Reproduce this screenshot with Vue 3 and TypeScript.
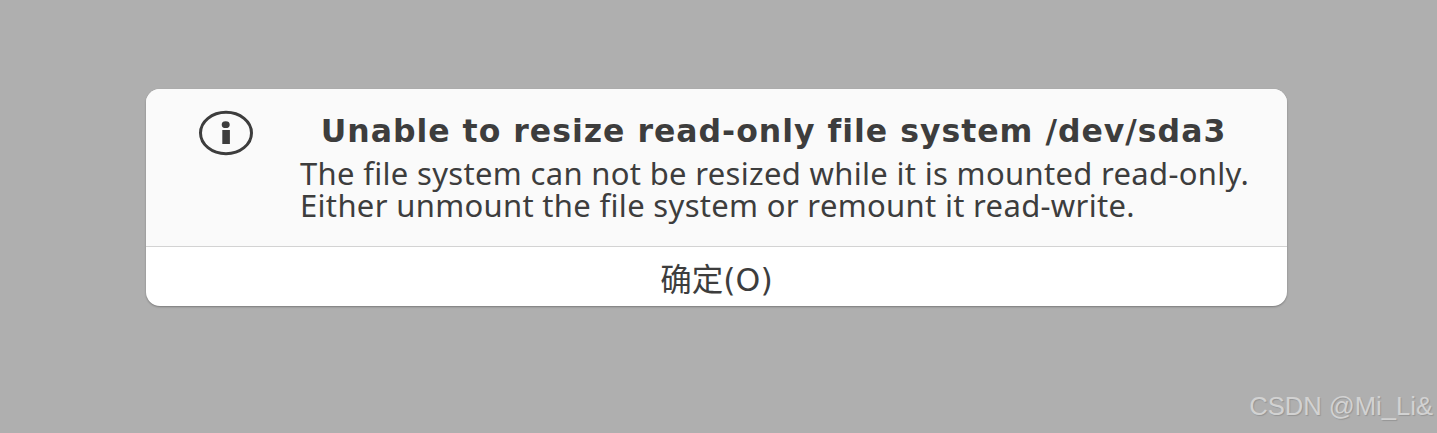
<script setup lang="ts">
const title = 'Unable to resize read-only file system /dev/sda3'
const lines = [
  'The file system can not be resized while it is mounted read-only.',
  'Either unmount the file system or remount it read-write.',
]
</script>

<template>
  <div class="screen">
    <div class="dialog">
      <div class="body">
        <svg class="icon" width="56" height="46" viewBox="0 0 56 46">
          <ellipse cx="28" cy="23" rx="25.5" ry="20.7" fill="none" stroke="#3d3d3d" stroke-width="3" />
          <ellipse cx="27.7" cy="14.7" rx="4" ry="3.4" fill="#3d3d3d" />
          <rect x="24.3" y="20" width="7.6" height="14" fill="#3d3d3d" />
        </svg>
        <div class="texts">
          <h1 class="title">{{ title }}</h1>
          <p v-for="line in lines" :key="line" class="line">{{ line }}</p>
        </div>
      </div>
      <div class="action">确定(O)</div>
    </div>
    <div class="mark">CSDN @Mi_Li&amp;</div>
  </div>
</template>

<style>
html, body { margin: 0; background: #afafaf; }
</style>

<style scoped>
.screen {
  position: relative;
  box-sizing: border-box;
  width: 1437px;
  height: 433px;
  padding: 89px 150px 0 146px;
  background: #afafaf;
  overflow: hidden;
  font-family: "Noto Sans", "Noto Sans CJK SC", sans-serif;
  color: #3d3d3d;
}
.dialog {
  width: 1141px;
  height: 217px;
  border-radius: 14px;
  background: #fff;
  overflow: hidden;
  display: flex;
  flex-direction: column;
  box-shadow: 0 1px 2px rgba(0, 0, 0, 0.3);
}
.body {
  height: 158px;
  box-sizing: border-box;
  background: #fafafa;
  border-bottom: 1px solid #d3d3d3;
  display: flex;
  padding: 21px 0 0 52px;
}
.icon { flex: none; }
.texts {
  margin-left: 46px;
  width: 947px;
}
.title {
  margin: 0 0 5px;
  height: 42px;
  font-family: "DejaVu Sans", sans-serif;
  font-size: 31.5px;
  letter-spacing: 1px;
  line-height: 42px;
  font-weight: 700;
  text-align: center;
  white-space: nowrap;
}
.line {
  margin: 0;
  font-size: 31px;
  letter-spacing: 0.32px;
  line-height: 32px;
  white-space: nowrap;
}
.action {
  flex: 1;
  display: flex;
  align-items: center;
  justify-content: center;
  font-size: 31.5px;
  font-family: "DejaVu Sans", "Noto Sans CJK SC", sans-serif;
}
.mark {
  position: absolute;
  right: 4px;
  bottom: 11px;
  font-family: "Liberation Sans", sans-serif;
  font-size: 25.6px;
  line-height: 32px;
  color: #d2d2d2;
  text-shadow: 1px 1px 1px rgba(0, 0, 0, 0.15);
  white-space: nowrap;
}
</style>
